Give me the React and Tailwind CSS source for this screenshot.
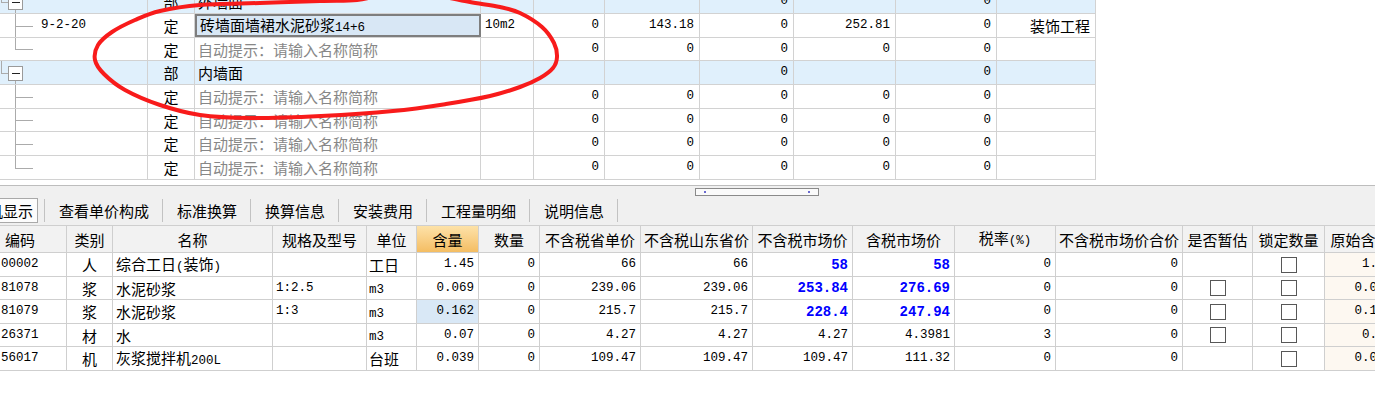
import React from "react";
import clsx from "clsx";

const MONO = "font-['Liberation_Mono',monospace]";

function T({ s, bold }) {
  const parts = s.match(/[\x00-\x7f]+|[^\x00-\x7f]+/g) || [];
  return (
    <span className="whitespace-nowrap">
      {parts.map((p, i) =>
        /^[\x00-\x7f]/.test(p) ? (
          <span key={i} className={clsx(MONO, bold ? "text-[14px] font-bold" : "text-[12.5px]")}>
            {p}
          </span>
        ) : (
          <span key={i}>{p}</span>
        )
      )}
    </span>
  );
}

function TreeLines({ kind, h }) {
  const H = h - 1;
  const c = Math.round(H / 2) + 0.5;
  const line = "#ababab";
  return (
    <svg className="absolute inset-0" width="148" height={H} shapeRendering="crispEdges">
      {kind === "child" && <line x1="15.5" y1="0" x2="15.5" y2={H} stroke={line} />}
      {kind === "last" && <line x1="15.5" y1="0" x2="15.5" y2={c} stroke={line} />}
      {(kind === "child" || kind === "last") && <line x1="15.5" y1={c} x2="33" y2={c} stroke={line} />}
      {(kind === "parent" || kind === "parentTop") && (
        <>
          <line x1="1.5" y1="0" x2="1.5" y2={c} stroke={line} />
          <line x1="1.5" y1={c} x2="9" y2={c} stroke={line} />
          <line x1="15.5" y1={c + 7} x2="15.5" y2={H} stroke={line} />
          <rect x="8.5" y={c - 7} width="14" height="14" fill="#fff" stroke="#9a9a9a" />
          <line x1="12" y1={c} x2="20" y2={c} stroke="#222" />
        </>
      )}
    </svg>
  );
}

const topRows = [
  { h: "h-[24px]", hp: 24, kind: "parentTop", blue: true, type: "部", name: "外墙面", vals: ["", "", "0", "", "0", ""] },
  { h: "h-[24px]", hp: 24, kind: "child", code: "9-2-20", type: "定", name: "砖墙面墙裙水泥砂浆14+6", sel: true, unit: "10m2", vals: ["0", "143.18", "0", "252.81", "0", "装饰工程"] },
  { h: "h-[23px]", hp: 23, kind: "last", type: "定", name: "自动提示：请输入名称简称", hint: true, vals: ["0", "0", "0", "0", "0", ""] },
  { h: "h-[24px]", hp: 24, kind: "parent", blue: true, type: "部", name: "内墙面", vals: ["", "", "0", "", "0", ""] },
  { h: "h-[24px]", hp: 24, kind: "child", type: "定", name: "自动提示：请输入名称简称", hint: true, vals: ["0", "0", "0", "0", "0", ""] },
  { h: "h-[23px]", hp: 23, kind: "child", type: "定", name: "自动提示：请输入名称简称", hint: true, vals: ["0", "0", "0", "0", "0", ""] },
  { h: "h-[24px]", hp: 24, kind: "child", type: "定", name: "自动提示：请输入名称简称", hint: true, vals: ["0", "0", "0", "0", "0", ""] },
  { h: "h-[24px]", hp: 24, kind: "last", type: "定", name: "自动提示：请输入名称简称", hint: true, vals: ["0", "0", "0", "0", "0", ""] },
];

const topNumW = ["w-[71px]", "w-[95px]", "w-[94px]", "w-[102px]", "w-[101px]", "w-[99px]"];

const BORDER = "border-[#d2d2d2]";

function TopRow({ r }) {
  return (
    <div className={clsx("flex border-b", BORDER, r.h, r.blue ? "bg-[#e0f0fc]" : "bg-white")}>
      <div className={clsx("relative w-[148px] shrink-0 border-r flex items-center", BORDER)}>
        <TreeLines kind={r.kind} h={r.hp} />
        {r.code && <span className={clsx("relative pl-[41px] text-[12.5px]", MONO)}>{r.code}</span>}
      </div>
      <div className={clsx("w-[47px] shrink-0 border-r flex items-center justify-center text-[15px]", BORDER)}>{r.type}</div>
      <div
        className={clsx(
          "w-[286px] shrink-0 flex items-center pl-[3px] text-[15px] whitespace-nowrap overflow-hidden",
          r.sel ? "bg-[#d8e7f5] border-2 border-[#7e7e7e]" : clsx("border-r", BORDER),
          r.hint ? "text-[#878787]" : "text-black"
        )}
      >
        <T s={r.name} />
      </div>
      <div className={clsx("w-[53px] shrink-0 border-r flex items-center pl-[4px] text-[12.5px]", BORDER, MONO)}>{r.unit || ""}</div>
      {r.vals.map((v, i) => (
        <div key={i} className={clsx("shrink-0 border-r flex items-center justify-end pr-[5px] whitespace-nowrap", BORDER, topNumW[i])}>
          {i === 5 ? <span className="text-[15px]">{v}</span> : <span className={clsx("text-[12.5px]", MONO)}>{v}</span>}
        </div>
      ))}
    </div>
  );
}

const bcols = [
  { w: "w-[67px]", title: "编码", hc: "justify-start pl-[5px]" },
  { w: "w-[46px]", title: "类别" },
  { w: "w-[160px]", title: "名称" },
  { w: "w-[94px]", title: "规格及型号" },
  { w: "w-[50px]", title: "单位" },
  { w: "w-[62px]", title: "含量", hl: true },
  { w: "w-[61px]", title: "数量" },
  { w: "w-[101px]", title: "不含税省单价" },
  { w: "w-[112px]", title: "不含税山东省价" },
  { w: "w-[100px]", title: "不含税市场价" },
  { w: "w-[102px]", title: "含税市场价" },
  { w: "w-[101px]", title: "税率(%)" },
  { w: "w-[127px]", title: "不含税市场价合价" },
  { w: "w-[70px]", title: "是否暂估" },
  { w: "w-[72px]", title: "锁定数量" },
  { w: "w-[72px]", title: "原始含量" },
];

const brows = [
  { h: "h-[24px]", code: "00002", type: "人", name: "综合工日(装饰)", spec: "", unit: "工日", qty: "1.45", p1: "66", p2: "66", p3: "58", p4: "58", blue: true, tax: "0", est: false, orig: "1.45" },
  { h: "h-[23px]", code: "81078", type: "浆", name: "水泥砂浆", spec: "1:2.5", unit: "m3", qty: "0.069", p1: "239.06", p2: "239.06", p3: "253.84", p4: "276.69", blue: true, tax: "0", est: true, orig: "0.069" },
  { h: "h-[24px]", code: "81079", type: "浆", name: "水泥砂浆", spec: "1:3", unit: "m3", qty: "0.162", sel: true, p1: "215.7", p2: "215.7", p3: "228.4", p4: "247.94", blue: true, tax: "0", est: true, orig: "0.162" },
  { h: "h-[23px]", code: "26371", type: "材", name: "水", spec: "", unit: "m3", qty: "0.07", p1: "4.27", p2: "4.27", p3: "4.27", p4: "4.3981", tax: "3", est: true, orig: "0.07" },
  { h: "h-[24px]", code: "56017", type: "机", name: "灰浆搅拌机200L", spec: "", unit: "台班", qty: "0.039", p1: "109.47", p2: "109.47", p3: "109.47", p4: "111.32", tax: "0", est: false, orig: "0.039" },
];

const BB = "border-[#cfcfcf]";

function C({ w, cls, children }) {
  return (
    <div className={clsx("shrink-0 flex items-center border-r whitespace-nowrap overflow-hidden", BB, w, cls)}>{children}</div>
  );
}

function Check() {
  return <div className="w-[16px] h-[16px] border-[1.5px] border-[#575757] bg-white" />;
}

function BRow({ r }) {
  const num = clsx("justify-end pr-[4px] text-[12.5px]", MONO);
  const blue = clsx("justify-end pr-[4px] text-[14px] font-bold text-[#0000ff]", MONO);
  return (
    <div className={clsx("flex border-b bg-white", BB, r.h)}>
      <C w="w-[67px]" cls={clsx("pl-[1px] text-[12.5px]", MONO)}>{r.code}</C>
      <C w="w-[46px]" cls="justify-center text-[15px]">{r.type}</C>
      <C w="w-[160px]" cls="pl-[3px] text-[15px]"><T s={r.name} /></C>
      <C w="w-[94px]" cls={clsx("pl-[3px] text-[12.5px]", MONO)}>{r.spec}</C>
      <C w="w-[50px]" cls="pl-[2px] text-[15px]"><T s={r.unit} /></C>
      <C w="w-[62px]" cls={clsx(num, r.sel && "bg-[#d9e8f6]")}>{r.qty}</C>
      <C w="w-[61px]" cls={num}>0</C>
      <C w="w-[101px]" cls={num}>{r.p1}</C>
      <C w="w-[112px]" cls={num}>{r.p2}</C>
      <C w="w-[100px]" cls={r.blue ? blue : num}>{r.p3}</C>
      <C w="w-[102px]" cls={r.blue ? blue : num}>{r.p4}</C>
      <C w="w-[101px]" cls={num}>{r.tax}</C>
      <C w="w-[127px]" cls={num}>0</C>
      <C w="w-[70px]" cls="justify-center">{r.est && <Check />}</C>
      <C w="w-[72px]" cls="justify-center"><Check /></C>
      <C w="w-[72px]" cls={clsx(num, "bg-[#fdf8f1]")}>{r.orig}</C>
    </div>
  );
}

const tabs = ["查看单价构成", "标准换算", "换算信息", "安装费用", "工程量明细", "说明信息"];

const redPts = [
  [440, -4], [470, 2], [500, 7], [520, 13], [542, 27], [554, 43], [557, 57], [553, 68], [540, 78], [520, 87],
  [490, 96], [446, 104], [393, 111], [321, 116], [250, 118], [200, 115], [160, 105], [125, 90], [104, 74],
  [95, 60], [98, 45], [112, 32], [135, 20], [160, 11], [200, 5], [260, 3], [320, 1], [357, 0], [380, -5],
];

function smoothPath(pts) {
  let d = `M ${pts[0][0]} ${pts[0][1]}`;
  for (let i = 0; i < pts.length - 1; i++) {
    const p0 = pts[i - 1] || pts[i];
    const p1 = pts[i];
    const p2 = pts[i + 1];
    const p3 = pts[i + 2] || p2;
    const c1x = p1[0] + (p2[0] - p0[0]) / 6;
    const c1y = p1[1] + (p2[1] - p0[1]) / 6;
    const c2x = p2[0] - (p3[0] - p1[0]) / 6;
    const c2y = p2[1] - (p3[1] - p1[1]) / 6;
    d += ` C ${c1x} ${c1y} ${c2x} ${c2y} ${p2[0]} ${p2[1]}`;
  }
  return d;
}

export default function App() {
  return (
    <div className="relative w-[1375px] h-[404px] overflow-hidden bg-white text-black font-['Noto_Sans_CJK_SC',sans-serif] leading-none">
      {/* top grid */}
      <div className="h-[185px] overflow-hidden">
        <div className="-mt-[10px] w-[1096px]">
          {topRows.map((r, i) => (
            <TopRow key={i} r={r} />
          ))}
        </div>
      </div>

      {/* splitter + tabs */}
      <div className="h-[40px] border-t border-[#bdbdbd] bg-[#f0f0f0] flex flex-col">
        <div className="ml-[695px] mt-[2px] w-[124px] h-[8px] border border-[#8a8a8a] bg-[#fafafa] flex items-center justify-between px-[8px]">
          <div className="w-[2px] h-[2px] bg-[#6a6ad0]" />
          <div className="w-[2px] h-[2px] bg-[#6a6ad0]" />
        </div>
        <div className="mt-[2px] h-[25px] flex items-stretch text-[15px] overflow-hidden">
          <div className="ml-[-47px] px-[4px] border border-[#a9a9a9] bg-[#fcfcfc] flex items-center whitespace-nowrap">工料机显示</div>
          <div className="ml-[6px] flex items-center">
            {tabs.map((t) => (
              <div key={t} className="flex items-center h-full">
                <div className="w-px h-[23px] bg-[#c2c2c2]" />
                <span className="pl-[14px] pr-[13px] whitespace-nowrap">{t}</span>
              </div>
            ))}
            <div className="w-px h-[23px] bg-[#c2c2c2]" />
          </div>
        </div>
      </div>

      {/* bottom grid */}
      <div className="w-max">
        <div className={clsx("flex h-[28px] border-t border-b bg-[#f2f2f2] text-[15px]", BB)}>
          {bcols.map((c) => (
            <div
              key={c.title}
              className={clsx(
                "shrink-0 flex items-center border-r whitespace-nowrap overflow-hidden",
                BB,
                c.w,
                c.hc || "justify-center",
                c.hl && "bg-gradient-to-b from-[#fde2a8] to-[#f4bd62]"
              )}
            >
              <T s={c.title} />
            </div>
          ))}
        </div>
        {brows.map((r) => (
          <BRow key={r.code} r={r} />
        ))}
      </div>

      {/* red hand-drawn marker */}
      <svg className="absolute left-0 top-0 pointer-events-none" width="1375" height="404">
        <path d={smoothPath(redPts)} fill="none" stroke="#f81b1b" strokeWidth="4" strokeLinecap="round" strokeLinejoin="round" />
      </svg>
    </div>
  );
}
